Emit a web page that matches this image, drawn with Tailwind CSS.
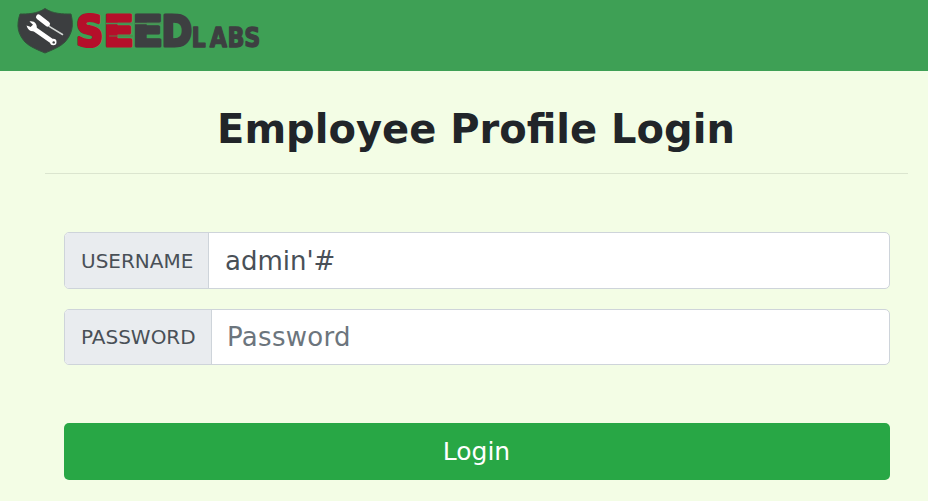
<!DOCTYPE html>
<html lang="en">
<head>
<meta charset="utf-8">
<title>SEED Labs</title>
<script src="https://cdn.jsdelivr.net/npm/@tailwindcss/browser@4"></script>
</head>
<body class="h-[501px] overflow-hidden bg-[#f3fde5] font-['DejaVu_Sans',sans-serif] text-[#212529]">
<nav class="h-[71px] bg-[#3ea055]">
<svg class="block" width="280" height="71" viewBox="0 0 280 71" role="img" aria-label="SEED Labs">
  <path d="M45 8.5C37 14 27 14 20 14C16 26 18 34 25 42C30 47 38 50 45 53C52 50 60 47 65 42C72 34 74 26 71 14C63 14 53 14 45 8.5Z" fill="#3c3e40" stroke="#33533b" stroke-width="1"/>
  <path d="M46 23L50 27L62.500 34.500" stroke="#d4d8d5" stroke-width="1.500" stroke-linecap="round" fill="none"/>
  <path d="M38.500 17L47.500 24" stroke="#fff" stroke-width="5" stroke-linecap="round"/>
  <path d="M33 28L53 42" stroke="#fff" stroke-width="4.600" stroke-linecap="round"/>
  <path d="M29.500 21.500C34 20.500 38 24 36.500 29.500C34 33 28 31.500 26.500 25.500L31 27L33 24.800Z" fill="#fff"/>
  <circle cx="53.300" cy="42" r="3.200" fill="#fff"/>
  <circle cx="53.700" cy="42.400" r="1.200" fill="#3c3e40"/>
  <g font-family="DejaVu Sans, sans-serif" font-weight="700" stroke-linejoin="round">
    <g font-size="43" stroke-width="3.200">
      <g fill="#b50f2a" stroke="#b50f2a">
        <text transform="translate(76 46) scale(.88 1)">S</text>
        <text transform="translate(103.600 46) scale(1.04 1)">E</text>
      </g>
      <g fill="#3d3f41" stroke="#3d3f41">
        <text transform="translate(132.600 46) scale(1.04 1)">E</text>
        <text transform="translate(161.600 46) scale(.86 1)">D</text>
      </g>
    </g>
    <text transform="translate(0 47.200) scale(.86 1)" x="222.700 244 264.500 284" font-size="26" fill="#3d3f41" stroke="#3d3f41" stroke-width="1.300">LABS</text>
  </g>
  <path d="M106 23.600H133M135 23.600H162" stroke="#4b8f55" stroke-width="1.500"/>
  <path d="M109 36H133" stroke="#5d7a45" stroke-width="1"/>
</svg>
</nav>
<main>
  <h1 class="pt-[34px] pl-[12px] ml-[12px] text-center text-[40px] leading-[48px] font-bold whitespace-nowrap">Employee Profile Login</h1>
  <hr class="mt-[20px] ml-[45px] w-[863px] border-0 h-px bg-[#dbe5cf]">
  <form class="mt-[58px] ml-[64px] w-[826px]">
    <div class="flex h-[57px] overflow-hidden rounded-[5px] border border-[#ced4da] bg-white">
      <label class="flex w-[144px] shrink-0 items-center border-r border-[#ced4da] bg-[#e9ecef] pl-4 text-[20px] text-[#495057]" for="u">USERNAME</label>
      <input id="u" class="min-w-0 flex-1 pt-px pl-[16px] text-[26px] text-[#495057] outline-none" value="admin'#">
    </div>
    <div class="mt-[20px] flex h-[56px] overflow-hidden rounded-[5px] border border-[#ced4da] bg-white">
      <label class="flex w-[147px] shrink-0 items-center border-r border-[#ced4da] bg-[#e9ecef] pl-4 text-[20px] text-[#495057]" for="p">PASSWORD</label>
      <input id="p" class="min-w-0 flex-1 pl-[15px] text-[26px] tracking-[0.3px] placeholder:text-[#6c757d] outline-none" placeholder="Password">
    </div>
    <button type="button" class="mt-[58px] block h-[57px] w-full rounded-[5px] bg-[#28a745] pr-px pt-px text-[25px] text-white">Login</button>
  </form>
</main>
</body>
</html>
